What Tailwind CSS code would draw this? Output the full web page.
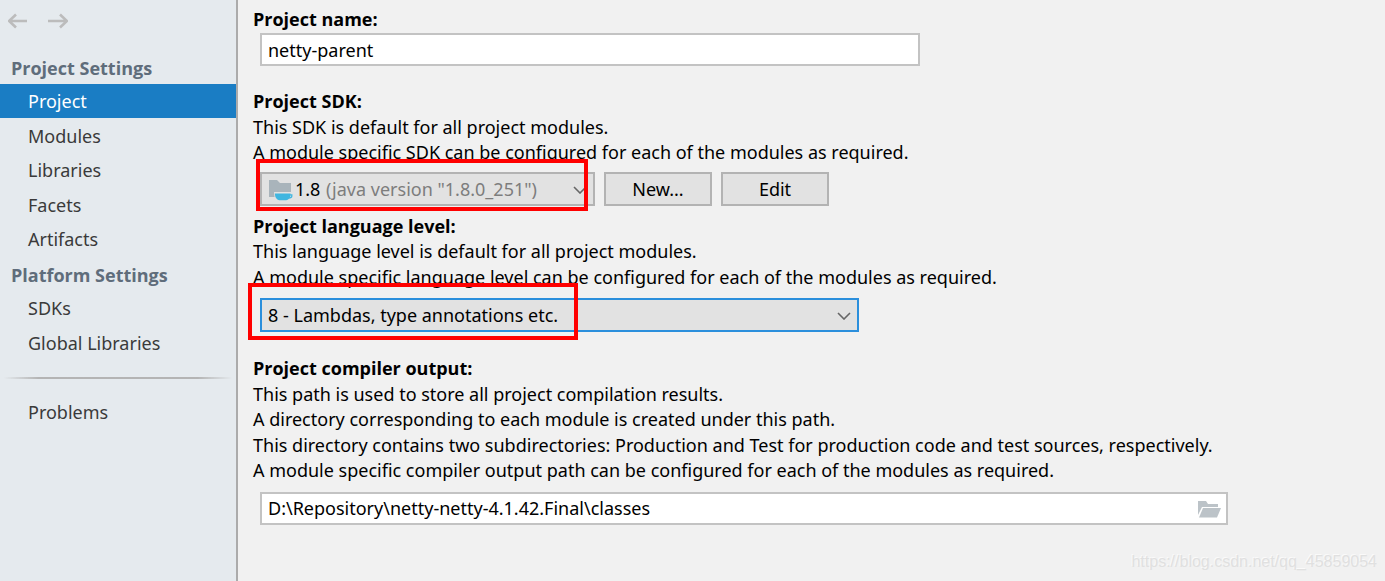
<!DOCTYPE html>
<html lang="en">
<head>
<meta charset="utf-8">
<title>Project Structure</title>
<script src="https://cdn.jsdelivr.net/npm/@tailwindcss/browser@4"></script>
</head>
<body class="flex min-h-screen bg-[#f1f1f1] font-['Noto_Sans','Open_Sans',sans-serif] text-[18px] leading-[25px] text-black">
<aside class="w-[238px] shrink-0 border-r-2 border-[#ababab] bg-[#e5eaee] text-[#3a3a3a]">
  <div class="flex h-[52px] gap-5 px-2 pt-[11px]">
    <button type="button" aria-label="Back" class="h-5 w-5"><svg viewBox="0 0 20 20" class="h-5 w-5" fill="none" stroke="#bcbcbc" stroke-width="2.600"><path d="M19 10H1M8 3.500L1 10l7 6.500"/></svg></button>
    <button type="button" aria-label="Forward" class="h-5 w-5"><svg viewBox="0 0 20 20" class="h-5 w-5" fill="none" stroke="#bcbcbc" stroke-width="2.600"><path d="M0 10h19M12 3.500l7 6.500-7 6.500"/></svg></button>
  </div>
  <nav aria-label="Settings">
    <h2 class="flex h-8 items-center pl-[11px] font-['Open_Sans',sans-serif] font-bold text-[#5f6d7b]">Project Settings</h2>
    <ul>
      <li><a href="#" aria-current="page" class="flex h-[34px] items-center bg-[#1a7dc4] pl-7 text-white">Project</a></li>
      <li class="even:mt-px"><a href="#" class="flex h-[34px] items-center pl-7">Modules</a></li>
      <li class="even:mt-px"><a href="#" class="flex h-[34px] items-center pl-7">Libraries</a></li>
      <li class="even:mt-px"><a href="#" class="flex h-[34px] items-center pl-7">Facets</a></li>
      <li class="even:mt-px"><a href="#" class="flex h-[34px] items-center pl-7">Artifacts</a></li>
    </ul>
    <h2 class="mt-[3px] flex h-8 items-center pl-[11px] font-['Open_Sans',sans-serif] font-bold text-[#5f6d7b]">Platform Settings</h2>
    <ul>
      <li><a href="#" class="flex h-[34px] items-center pl-7">SDKs</a></li>
      <li class="even:mt-px"><a href="#" class="flex h-[34px] items-center pl-7">Global Libraries</a></li>
    </ul>
    <hr class="mx-1 mt-[17px] h-[2px] border-0 bg-linear-to-r from-transparent via-[#b4b4b4] from-0% via-15% to-[#b4b4b4] to-85% mask-r-from-85%">
    <a href="#" class="mt-4 flex h-[34px] items-center pl-7">Problems</a>
  </nav>
</aside>

<main class="relative min-w-0 flex-1 pl-[15px] pr-4 pt-[7px]">
  <section>
    <label for="name" class="block font-['Open_Sans',sans-serif] font-bold">Project name:</label>
    <input id="name" type="text" value="netty-parent" class="mt-px ml-[7px] block h-[33px] w-full max-w-[660px] border-2 border-[#c3c3c3] bg-white px-1.5 outline-none">
  </section>

  <section class="mt-[23px]">
    <label for="sdk" class="block font-['Open_Sans',sans-serif] font-bold">Project SDK:</label>
    <p class="mt-px">This SDK is default for all project modules.</p>
    <p>A module specific SDK can be configured for each of the modules as required.</p>
    <div class="mt-[7px] ml-[7px] flex gap-[9px]">
      <div class="relative h-[34px] w-[335px]">
        <select id="sdk" class="h-full w-full appearance-none border-2 border-[#b3b3b3] bg-[#e2e2e2] pl-[33px] outline-none"><option>1.8</option></select>
        <svg viewBox="0 0 24 22" class="pointer-events-none absolute left-[9px] top-[7px] h-[22px] w-6"><path d="M0 1h8l3 3h11v14H0z" fill="#a9b4bb"/><path d="M5 13h19v9H6z" fill="#e2e2e2"/><path d="M6 14.500h15.500v1c0 3.500-2.500 5.800-5.500 5.800h-4.500c-3 0-5.500-2.300-5.500-5.800z" fill="#40b6e0"/><path d="M20.500 15.800h2.300v1.400c0 1.200-1.200 1.800-3.300 1.800" fill="none" stroke="#40b6e0" stroke-width="1.300"/></svg>
        <span class="pointer-events-none absolute left-[66px] top-[5px] text-[#7d7d7d]">(java version "1.8.0_251")</span>
        <svg viewBox="0 0 14 8" class="pointer-events-none absolute right-2 top-[14px] h-2 w-3.5" fill="none" stroke="#666" stroke-width="1.600"><path d="M1 1l6 6 6-6"/></svg>
        <div class="pointer-events-none absolute -left-1 -top-[13px] h-[52px] w-[332px] border-4 border-[#ff0000]"></div>
      </div>
      <button type="button" class="h-[34px] w-[108px] border-2 border-[#b3b3b3] bg-[#e2e2e2]">New...</button>
      <button type="button" class="h-[34px] w-[108px] border-2 border-[#b3b3b3] bg-[#e2e2e2]">Edit</button>
    </div>
  </section>

  <section class="mt-2">
    <label for="level" class="block font-['Open_Sans',sans-serif] font-bold">Project language level:</label>
    <p>This language level is default for all project modules.</p>
    <p class="mt-px">A module specific language level can be configured for each of the modules as required.</p>
    <div class="relative mt-2 ml-[7px] h-[34px] w-full max-w-[599px]">
      <select id="level" class="h-full w-full appearance-none border-2 border-[#2b8fdc] bg-[#e2e2e2] pl-1.5 outline-none"><option>8 - Lambdas, type annotations etc.</option></select>
      <svg viewBox="0 0 14 8" class="pointer-events-none absolute right-2 top-[14px] h-2 w-3.5" fill="none" stroke="#666" stroke-width="1.600"><path d="M1 1l6 6 6-6"/></svg>
      <div class="pointer-events-none absolute -left-3 -top-[15px] h-[57px] w-[330px] border-4 border-[#ff0000]"></div>
    </div>
  </section>

  <section class="mt-6">
    <label for="output" class="block font-['Open_Sans',sans-serif] font-bold">Project compiler output:</label>
    <p class="mt-px">This path is used to store all project compilation results.</p>
    <p>A directory corresponding to each module is created under this path.</p>
    <p class="mt-px">This directory contains two subdirectories: Production and Test for production code and test sources, respectively.</p>
    <p>A module specific compiler output path can be configured for each of the modules as required.</p>
    <div class="mt-[9px] ml-[7px] flex h-[33px] max-w-[968px] items-center border-2 border-[#c3c3c3] bg-white pr-[5px]">
      <input id="output" type="text" value="D:\Repository\netty-netty-4.1.42.Final\classes" class="min-w-0 flex-1 bg-transparent px-1.5 outline-none">
      <button type="button" aria-label="Browse"><svg viewBox="0 0 23 18" class="h-[18px] w-[23px]" fill="#bcc3c8"><path d="M0 1h8l2 3h10v3H4L0 15z"/><path d="M5 8h18l-4 9.500H1z"/></svg></button>
    </div>
  </section>
  <div class="absolute bottom-[7px] right-2 font-['Liberation_Sans',sans-serif] text-[16px] text-[#e0e0e0] text-shadow-[-1px_-1px_0_#fafafa]">https://blog.csdn.net/qq_45859054</div>
</main>
</body>
</html>
